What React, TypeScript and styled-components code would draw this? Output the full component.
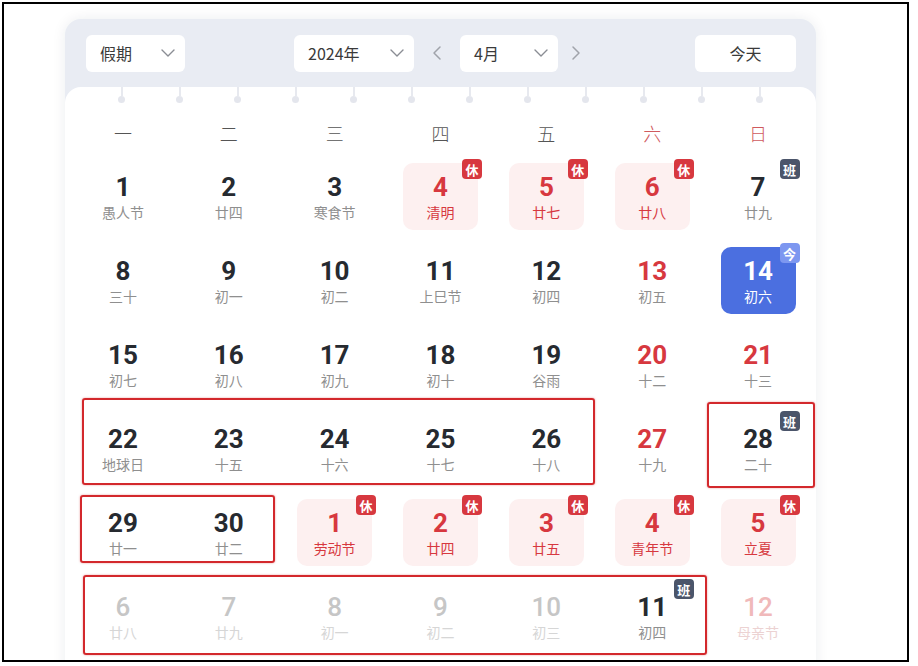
import React from 'react';
import styled, { createGlobalStyle } from 'styled-components';
import { ChevronDown, ChevronLeft, ChevronRight } from 'lucide-react';

type Kind = 'normal' | 'weekend' | 'holiday' | 'work' | 'today' | 'faded' | 'fadedRed';

interface IDay {
  day: number;
  lunar: string;
  kind: Kind;
}

const RED = '#d7383f';

const GlobalStyle = createGlobalStyle`
  html, body {
    margin: 0;
    padding: 0;
    background: #fff;
  }
  body {
    font-family: "Noto Sans CJK SC", "Noto Sans", sans-serif;
  }
`;

const Frame = styled.div`
  position: relative;
  box-sizing: border-box;
  width: 907px;
  height: 660px;
  margin: 2px 0 0 2px;
  border: 2px solid #000;
  overflow: hidden;
  background: #fff;
`;

const Card = styled.div`
  position: relative;
  width: 751px;
  margin: 15px 0 0 61px;
  border-radius: 16px;
  background: #e9ecf3;
  box-shadow: 0 0 14px rgba(30, 40, 70, 0.08);
`;

const Header = styled.div`
  display: flex;
  align-items: center;
  box-sizing: border-box;
  height: 68px;
  padding: 0 20px 0 21px;
`;

const Select = styled.div<{ $w: number; $ml?: number }>`
  display: flex;
  align-items: center;
  justify-content: space-between;
  box-sizing: border-box;
  width: ${p => p.$w}px;
  height: 37px;
  margin-left: ${p => p.$ml || 0}px;
  padding: 0 5px 0 14px;
  border-radius: 6px;
  background: #fff;
  font-size: 16px;
  color: #3a3a3a;

  svg {
    color: #8a8d94;
  }
`;

const NavArrow = styled.div<{ $w: number }>`
  display: flex;
  align-items: center;
  justify-content: center;
  width: ${p => p.$w}px;
  color: #a0a3aa;
`;

const TodayButton = styled.div`
  display: flex;
  align-items: center;
  justify-content: center;
  width: 101px;
  height: 37px;
  margin-left: auto;
  border-radius: 6px;
  background: #fff;
  font-size: 16px;
  color: #3a3a3a;
`;

const Body = styled.div`
  background: #fff;
  border-radius: 16px 16px 0 0;
  padding: 0 5px 60px;
`;

const Pins = styled.div`
  display: flex;
  justify-content: center;
  gap: 51px;
  height: 16px;
  margin-bottom: 10px;
`;

const Pin = styled.div`
  display: flex;
  flex-direction: column;
  align-items: center;
  width: 7px;
`;

const Stem = styled.div`
  width: 2px;
  height: 9px;
  background: #e7e9ef;
`;

const Dot = styled.div`
  width: 7px;
  height: 7px;
  border-radius: 50%;
  background: #e4e6ed;
`;

const WeekRow = styled.div`
  display: grid;
  grid-template-columns: repeat(7, 1fr);
  height: 40px;
  align-items: center;
`;

const WeekDay = styled.div<{ $red?: boolean }>`
  text-align: center;
  font-size: 18px;
  font-weight: 300;
  color: ${p => (p.$red ? '#cf5a5e' : '#555')};
`;

const Grid = styled.div`
  display: grid;
  grid-template-columns: repeat(7, 1fr);
  row-gap: 17px;
  margin-top: 10px;
`;

const numColor: Record<Kind, string> = {
  normal: '#262a30',
  weekend: RED,
  holiday: RED,
  work: '#262a30',
  today: '#fff',
  faded: '#c6c6c6',
  fadedRed: '#f0b9ba',
};

const lunarColor: Record<Kind, string> = {
  normal: '#8f8f8f',
  weekend: '#8f8f8f',
  holiday: RED,
  work: '#8f8f8f',
  today: '#fff',
  faded: '#d6d6d6',
  fadedRed: '#ecd2d2',
};

const cellBg: Record<Kind, string> = {
  normal: 'transparent',
  weekend: 'transparent',
  holiday: '#fdf0f0',
  work: 'transparent',
  today: '#4b6fe0',
  faded: 'transparent',
  fadedRed: 'transparent',
};

const Cell = styled.div<{ $kind: Kind }>`
  position: relative;
  justify-self: center;
  display: flex;
  flex-direction: column;
  align-items: center;
  justify-content: center;
  width: 75px;
  height: 67px;
  border-radius: 10px;
  background: ${p => cellBg[p.$kind]};
`;

const Num = styled.div<{ $kind: Kind }>`
  font-family: Roboto, "Liberation Sans", sans-serif;
  font-weight: ${p => (p.$kind === 'faded' || p.$kind === 'fadedRed' ? 500 : 700)};
  font-size: 26px;
  line-height: 28px;
  color: ${p => numColor[p.$kind]};
`;

const Lunar = styled.div<{ $kind: Kind }>`
  margin-top: 2px;
  font-size: 14px;
  line-height: 18px;
  color: ${p => lunarColor[p.$kind]};
`;

const Badge = styled.div<{ $tone: 'rest' | 'work' | 'today' }>`
  position: absolute;
  top: -4px;
  right: -4px;
  display: flex;
  align-items: center;
  justify-content: center;
  width: 20px;
  height: 20px;
  border-radius: 4px;
  font-size: 13px;
  font-weight: 700;
  color: #fff;
  background: ${p => (p.$tone === 'rest' ? RED : p.$tone === 'work' ? '#4b556a' : '#7d97f0')};
`;

const RedBox = styled.div<{ $x: number; $y: number; $w: number; $h: number }>`
  position: absolute;
  left: ${p => p.$x}px;
  top: ${p => p.$y}px;
  width: ${p => p.$w}px;
  height: ${p => p.$h}px;
  box-sizing: border-box;
  border: 2px solid #d3282c;
  border-radius: 3px;
  box-shadow: 0 0 2px rgba(211, 40, 44, 0.5);
  pointer-events: none;
`;

const weekDays = ['一', '二', '三', '四', '五', '六', '日'];

const d = (day: number, lunar: string, kind: Kind = 'normal'): IDay => ({ day, lunar, kind });

const rows: IDay[][] = [
  [d(1, '愚人节'), d(2, '廿四'), d(3, '寒食节'), d(4, '清明', 'holiday'), d(5, '廿七', 'holiday'), d(6, '廿八', 'holiday'), d(7, '廿九', 'work')],
  [d(8, '三十'), d(9, '初一'), d(10, '初二'), d(11, '上巳节'), d(12, '初四'), d(13, '初五', 'weekend'), d(14, '初六', 'today')],
  [d(15, '初七'), d(16, '初八'), d(17, '初九'), d(18, '初十'), d(19, '谷雨'), d(20, '十二', 'weekend'), d(21, '十三', 'weekend')],
  [d(22, '地球日'), d(23, '十五'), d(24, '十六'), d(25, '十七'), d(26, '十八'), d(27, '十九', 'weekend'), d(28, '二十', 'work')],
  [d(29, '廿一'), d(30, '廿二'), d(1, '劳动节', 'holiday'), d(2, '廿四', 'holiday'), d(3, '廿五', 'holiday'), d(4, '青年节', 'holiday'), d(5, '立夏', 'holiday')],
  [d(6, '廿八', 'faded'), d(7, '廿九', 'faded'), d(8, '初一', 'faded'), d(9, '初二', 'faded'), d(10, '初三', 'faded'), d(11, '初四', 'work'), d(12, '母亲节', 'fadedRed')],
];

const badgeFor = (kind: Kind) => {
  if (kind === 'holiday') return <Badge $tone="rest">休</Badge>;
  if (kind === 'work') return <Badge $tone="work">班</Badge>;
  if (kind === 'today') return <Badge $tone="today">今</Badge>;
  return null;
};

const App = () => {
  return (
    <>
      <GlobalStyle />
      <Frame>
        <Card>
          <Header>
            <Select $w={99}>
              假期
              <ChevronDown size={24} strokeWidth={1.4} />
            </Select>
            <Select $w={120} $ml={109}>
              2024年
              <ChevronDown size={24} strokeWidth={1.4} />
            </Select>
            <NavArrow $w={46}>
              <ChevronLeft size={24} strokeWidth={1.5} />
            </NavArrow>
            <Select $w={98}>
              4月
              <ChevronDown size={24} strokeWidth={1.4} />
            </Select>
            <NavArrow $w={36}>
              <ChevronRight size={24} strokeWidth={1.5} />
            </NavArrow>
            <TodayButton>今天</TodayButton>
          </Header>
          <Body>
            <Pins>
              {Array.from({ length: 12 }).map((_, i) => (
                <Pin key={i}>
                  <Stem />
                  <Dot />
                </Pin>
              ))}
            </Pins>
            <WeekRow>
              {weekDays.map((w, i) => (
                <WeekDay key={w} $red={i >= 5}>{w}</WeekDay>
              ))}
            </WeekRow>
            <Grid>
              {rows.flat().map((c, i) => (
                <Cell key={i} $kind={c.kind}>
                  <Num $kind={c.kind}>{c.day}</Num>
                  <Lunar $kind={c.kind}>{c.lunar}</Lunar>
                  {badgeFor(c.kind)}
                </Cell>
              ))}
            </Grid>
          </Body>
          <RedBox $x={17} $y={379} $w={513} $h={87} />
          <RedBox $x={642} $y={383} $w={108} $h={86} />
          <RedBox $x={15} $y={476} $w={195} $h={68} />
          <RedBox $x={18} $y={556} $w={624} $h={80} />
        </Card>
      </Frame>
    </>
  );
};

export default App;
